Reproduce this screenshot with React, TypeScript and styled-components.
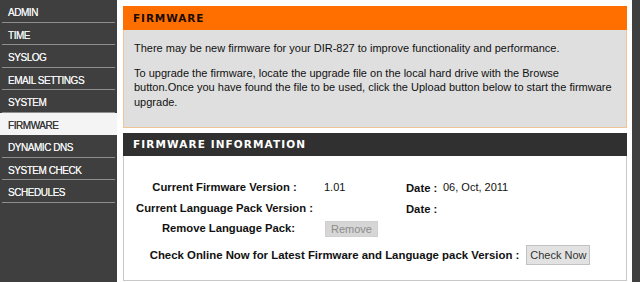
import React from "react";
import styled, { createGlobalStyle, css } from "styled-components";

const GlobalStyle = createGlobalStyle`
  html, body {
    margin: 0;
    padding: 0;
    background: #ffffff;
  }
  body {
    width: 640px;
    height: 282px;
    overflow: hidden;
    font-family: "Liberation Sans", Arial, sans-serif;
  }
`;

interface propActive {
  active?: boolean;
}
interface propShift {
  shift?: number;
}

const Page = styled.div`
  display: flex;
  width: 640px;
  height: 282px;
`;

const Sidebar = styled.ul`
  width: 117px;
  margin: 0;
  padding: 0;
  list-style: none;
  background-color: #3f3f3f;
  flex-shrink: 0;
`;

const NavItem = styled.li<propActive>`
  height: 18.5px;
  padding-top: 3px;
  line-height: 20px;
  padding-left: 6px;
  font-size: 10px;
  letter-spacing: -0.45px;
  text-transform: uppercase;
  text-shadow: 0 0 0.4px currentColor;
  border-bottom: 1px solid #8e8e8e;
  margin: 0 2px;
  ${({ active }) => {
    if (active) {
      return css`
        background-color: #f4f4f4;
        color: #3a3a3a;
        margin: 0;
        padding-left: 8px;
        border-bottom-color: #f4f4f4;
      `;
    } else {
      return css`
        color: #f2f2f2;
      `;
    }
  }}
`;

const Main = styled.div`
  flex: 1;
  display: flex;
  flex-direction: column;
  gap: 5px;
  padding: 6px 5px 1px 6px;
`;

const RightStrip = styled.div`
  width: 8px;
  background-color: #3f3f3f;
  flex-shrink: 0;
`;

const SectionHeader = styled.div<{ tone: "orange" | "dark" }>`
  height: 24px;
  line-height: 24px;
  padding-left: 10px;
  font-family: "DejaVu Sans", Verdana, sans-serif;
  font-weight: bold;
  font-size: 10.5px;
  letter-spacing: 0.9px;
  ${({ tone }) =>
    tone === "orange"
      ? css`
          background-color: #ff6f00;
          color: #1a0c00;
        `
      : css`
          height: 23px;
          line-height: 23px;
          background-color: #303030;
          color: #ffffff;
          letter-spacing: 1.1px;
        `}
`;

const IntroSection = styled.div`
  display: flex;
  flex-direction: column;
`;

const IntroBody = styled.div`
  height: 98px;
  box-sizing: border-box;
  background-color: #dfdfdf;
  border: 1px solid #f2c397;
  border-top: none;
  padding: 11px 10px 0 10px;
  font-size: 11px;
  color: #111;
`;

const Para = styled.p`
  margin: 0 0 10px 0;
  line-height: 14.5px;
`;

const InfoSection = styled.div`
  flex: 1;
  display: flex;
  flex-direction: column;
`;

const InfoBody = styled.div`
  flex: 1;
  border: 1px solid #c8c8c8;
  border-top: none;
  padding-top: 21px;
`;

const InfoGrid = styled.div`
  display: grid;
  grid-template-columns: 191px 78px 33px auto;
  grid-auto-rows: 20.5px;
  column-gap: 4px;
  padding-left: 5px;
  font-size: 11px;
  color: #111;
`;

const Label = styled.div<propShift>`
  text-align: center;
  font-weight: bold;
  font-size: 11.25px;
  line-height: 20.5px;
  padding-left: ${({ shift }) => (shift ? `${shift}px` : "0")};
`;

const Value = styled.div`
  line-height: 22px;
  display: flex;
  align-items: center;
`;

const DateLabel = styled(Label)`
  text-align: left;
  white-space: nowrap;
  line-height: 22px;
`;

const GreyButton = styled.button<{ disabled?: boolean }>`
  font-family: "Liberation Sans", Arial, sans-serif;
  font-size: 11px;
  padding: 0;
  ${({ disabled }) =>
    disabled
      ? css`
          width: 53px;
          height: 16px;
          margin-top: 1px;
          margin-left: 1px;
          background-color: #d6d6d6;
          color: #8c8c8c;
          border: 1px solid #d0d0d0;
        `
      : css`
          width: 64px;
          height: 20px;
          background-color: #e2e2e2;
          color: #333;
          border: 1px solid #c2c2c2;
        `}
`;

const CheckRow = styled.div`
  display: flex;
  justify-content: center;
  align-items: center;
  gap: 7px;
  margin-top: 6px;
  padding-right: 10px;
`;

const CheckLabel = styled.span`
  font-weight: bold;
  font-size: 11.4px;
  color: #111;
`;

const navItems = [
  "Admin",
  "Time",
  "Syslog",
  "Email Settings",
  "System",
  "Firmware",
  "Dynamic DNS",
  "System Check",
  "Schedules",
];

function App() {
  return (
    <>
      <GlobalStyle />
      <Page>
        <Sidebar>
          {navItems.map((item) => (
            <NavItem key={item} active={item === "Firmware"}>
              {item}
            </NavItem>
          ))}
        </Sidebar>
        <Main>
          <IntroSection>
            <SectionHeader tone="orange">FIRMWARE</SectionHeader>
            <IntroBody>
              <Para>
                There may be new firmware for your DIR-827 to improve functionality and performance.
              </Para>
              <Para>
                To upgrade the firmware, locate the upgrade file on the local hard drive with the Browse
                <br />
                button.Once you have found the file to be used, click the Upload button below to start the firmware
                <br />
                upgrade.
              </Para>
            </IntroBody>
          </IntroSection>
          <InfoSection>
            <SectionHeader tone="dark">FIRMWARE INFORMATION</SectionHeader>
            <InfoBody>
              <InfoGrid>
                <Label>Current Firmware Version :</Label>
                <Value>1.01</Value>
                <DateLabel>Date :</DateLabel>
                <Value>06, Oct, 2011</Value>

                <Label>Current Language Pack Version :</Label>
                <Value />
                <DateLabel>Date :</DateLabel>
                <Value />

                <Label shift={8}>Remove Language Pack:</Label>
                <Value>
                  <GreyButton disabled>Remove</GreyButton>
                </Value>
                <Value />
                <Value />
              </InfoGrid>
              <CheckRow>
                <CheckLabel>Check Online Now for Latest Firmware and Language pack Version :</CheckLabel>
                <GreyButton>Check Now</GreyButton>
              </CheckRow>
            </InfoBody>
          </InfoSection>
        </Main>
        <RightStrip />
      </Page>
    </>
  );
}

export default App;
